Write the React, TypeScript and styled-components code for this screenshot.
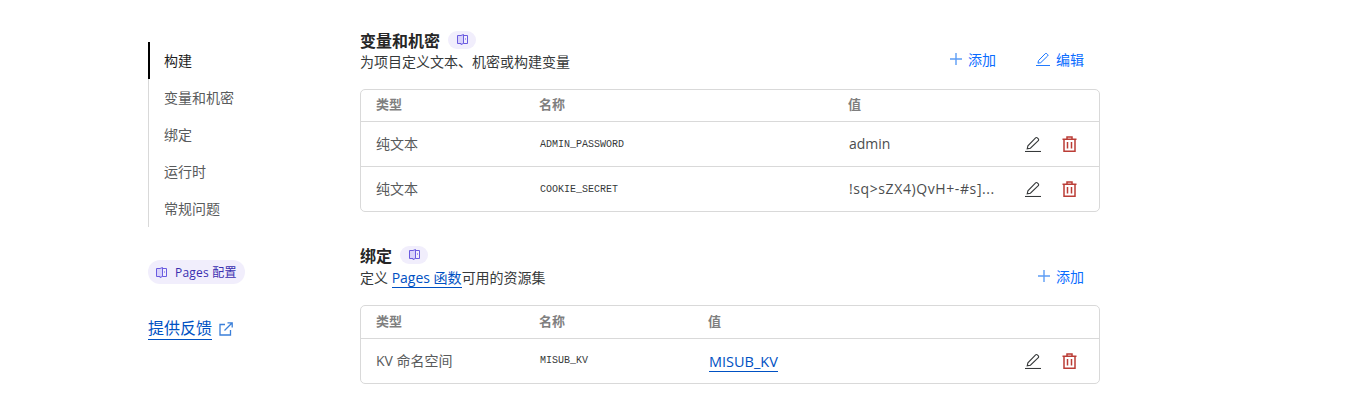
import React from "react";
import styled, { createGlobalStyle } from "styled-components";

const GlobalStyle = createGlobalStyle`
  html, body {
    margin: 0;
    padding: 0;
    background: #fff;
    overflow: hidden;
  }
  body {
    font-family: "Open Sans", "Noto Sans CJK SC", sans-serif;
    color: #36393a;
  }
  * {
    box-sizing: border-box;
  }
`;

const Page = styled.div`
  display: flex;
  width: 1366px;
  height: 410px;
  padding: 28px 0 0 148px;
`;

const Sidebar = styled.aside`
  width: 212px;
  flex-shrink: 0;
  padding-top: 14px;
`;

const Nav = styled.nav`
  display: flex;
  flex-direction: column;
  border-left: 1px solid #d9d9d9;
`;

const NavItem = styled.a<{ $active?: boolean }>`
  display: flex;
  align-items: center;
  height: 37px;
  padding: 0 0 2px 14px;
  margin-left: -1px;
  font-size: 14px;
  color: ${(props) => (props.$active ? "#1d1d1d" : "#595b5c")};
  border-left: 2px solid ${(props) => (props.$active ? "#000" : "transparent")};
`;

const DocsPill = styled.a`
  display: inline-flex;
  align-items: center;
  gap: 8px;
  height: 24px;
  margin-top: 33px;
  padding: 0 8px 0 8px;
  border-radius: 12px;
  background: #f1eefc;
  color: #3a2fb0;
  font-size: 12px;
  letter-spacing: 0.2px;
`;

const Feedback = styled.div`
  display: flex;
  align-items: center;
  gap: 7px;
  margin-top: 34px;
`;

const FeedbackLink = styled.a`
  font-size: 16px;
  line-height: 21px;
  color: #0051c3;
  border-bottom: 1px solid #0051c3;
`;

const Main = styled.main`
  width: 740px;
  display: flex;
  flex-direction: column;
  gap: 31.3px;
`;

const Section = styled.section`
  display: flex;
  flex-direction: column;
`;

const SectionHead = styled.div<{ $gap: number }>`
  display: flex;
  justify-content: space-between;
  align-items: flex-end;
  margin-bottom: ${(props) => props.$gap}px;
`;

const TitleRow = styled.div`
  display: flex;
  align-items: center;
  gap: 8px;
  height: 23px;
`;

const Title = styled.h2`
  margin: 0;
  font-size: 16px;
  font-weight: 600;
  color: #262626;
`;

const IconPill = styled.span`
  display: inline-flex;
  align-items: center;
  justify-content: center;
  width: 28px;
  height: 18px;
  border-radius: 9px;
  background: #f1eefc;
`;

const Subtitle = styled.p<{ $top?: number }>`
  margin: ${(props) => props.$top ?? 0}px 0 0;
  font-size: 14px;
  line-height: 21px;
  color: #36393a;
`;

const InlineLink = styled.a`
  color: #0051c3;
  border-bottom: 1px solid #0051c3;
`;

const Actions = styled.div<{ $lift: number }>`
  display: flex;
  align-items: center;
  gap: 40px;
  margin-right: 16px;
  margin-bottom: ${(props) => props.$lift}px;
`;

const ActionButton = styled.button`
  display: inline-flex;
  align-items: center;
  gap: 6px;
  padding: 0;
  border: 0;
  background: none;
  font: inherit;
  font-size: 14px;
  color: #0a6cff;
`;

const Table = styled.div`
  border: 1px solid #d9d9d9;
  border-radius: 5px;
`;

const Row = styled.div<{ $columns: string; $head?: boolean }>`
  display: grid;
  grid-template-columns: ${(props) => props.$columns};
  align-items: center;
  height: ${(props) => (props.$head ? 31.5 : 45)}px;
  padding-left: 15px;
  border-top: ${(props) => (props.$head ? "0" : "1px solid #d9d9d9")};
`;

const HeadCell = styled.div`
  padding-bottom: 3px;
  font-size: 13px;
  font-weight: 600;
  color: #7f7f7f;
`;

const Cell = styled.div`
  padding-bottom: 2px;
  font-size: 14px;
  color: #595b5c;
`;

const Mono = styled.div`
  font-family: "Liberation Mono", monospace;
  font-size: 10px;
  color: #36393a;
  padding-left: 1px;
`;

const Value = styled.div<{ $spread?: boolean }>`
  padding: 0 0 2px 1px;
  font-size: 14px;
  color: #4b4d4e;
  white-space: nowrap;
  letter-spacing: ${(props) => (props.$spread ? "0.6px" : "0")};
`;

const LinkCell = styled.div`
  padding-left: 1px;
`;

const ValueLink = styled.a`
  font-size: 14.5px;
  line-height: 18px;
  color: #0051c3;
  border-bottom: 1px solid #0051c3;
`;

const RowTools = styled.div`
  display: flex;
  align-items: center;
  justify-content: flex-end;
  gap: 21px;
  padding-right: 22px;
`;

const BookIcon = ({ color = "#6a5be0" }: { color?: string }) => (
  <svg width="11" height="11" viewBox="0 0 11 11" fill="none" stroke={color} strokeWidth="1">
    <path d="M.5 1.5h3.5l2.5-1v9l-2.5 1v-1H.5z" fill="#d9d3fb" />
    <path d="M6.5 1.5h4v8h-4" />
    <path d="M8 5h1" />
  </svg>
);

const PlusIcon = () => (
  <svg width="12" height="12" viewBox="0 0 12 12" stroke="#5d9df5" strokeWidth="1.4">
    <path d="M6 0v12M0 6h12" />
  </svg>
);

const EditIcon = ({ color, size }: { color: string; size: number }) => (
  <svg width={size} height={size} viewBox="0 0 16 16" fill="none" stroke={color} strokeWidth="1.1">
    <path d="M0 15.5h16" />
    <path d="M2.2 12.8l.7-3L10.6 1.9a1.2 1.2 0 0 1 1.7 0l1 1a1.2 1.2 0 0 1 0 1.7L5.4 12.2z" />
  </svg>
);

const TrashIcon = () => (
  <svg width="15" height="16" viewBox="0 0 15 16" fill="none" stroke="#bb3d36" strokeWidth="1.5">
    <path d="M.5 3.2h14M5 3V1h5v2" />
    <path d="M2 3.2v12h11v-12" />
    <path d="M5.5 6v6.5M9.5 6v6.5" />
  </svg>
);

const ExternalIcon = () => (
  <svg width="14" height="14" viewBox="0 0 14 14" fill="none" stroke="#3a7fd9" strokeWidth="1.3">
    <path d="M6 2.5H1v10.5h10.5V8" />
    <path d="M5.5 8.5L13 1M8.5 .8H13.2V5.5" />
  </svg>
);

const Tools = () => (
  <RowTools>
    <EditIcon color="#36393a" size={16} />
    <TrashIcon />
  </RowTools>
);

const varColumns = "163px 309px 1fr 90px";
const bindColumns = "163px 169px 1fr 90px";

export default function App() {
  return (
    <>
      <GlobalStyle />
      <Page>
        <Sidebar>
          <Nav>
            <NavItem $active>构建</NavItem>
            <NavItem>变量和机密</NavItem>
            <NavItem>绑定</NavItem>
            <NavItem>运行时</NavItem>
            <NavItem>常规问题</NavItem>
          </Nav>
          <DocsPill>
            <BookIcon />
            Pages 配置
          </DocsPill>
          <Feedback>
            <FeedbackLink>提供反馈</FeedbackLink>
            <ExternalIcon />
          </Feedback>
        </Sidebar>
        <Main>
          <Section>
            <SectionHead $gap={16.6}>
              <div>
                <TitleRow>
                  <Title>变量和机密</Title>
                  <IconPill>
                    <BookIcon />
                  </IconPill>
                </TitleRow>
                <Subtitle>为项目定义文本、机密或构建变量</Subtitle>
              </div>
              <Actions $lift={3}>
                <ActionButton>
                  <PlusIcon />
                  添加
                </ActionButton>
                <ActionButton>
                  <EditIcon color="#0a6cff" size={14} />
                  编辑
                </ActionButton>
              </Actions>
            </SectionHead>
            <Table>
              <Row $head $columns={varColumns}>
                <HeadCell>类型</HeadCell>
                <HeadCell>名称</HeadCell>
                <HeadCell>值</HeadCell>
              </Row>
              <Row $columns={varColumns}>
                <Cell>纯文本</Cell>
                <Mono>ADMIN_PASSWORD</Mono>
                <Value>admin</Value>
                <Tools />
              </Row>
              <Row $columns={varColumns}>
                <Cell>纯文本</Cell>
                <Mono>COOKIE_SECRET</Mono>
                <Value $spread>!sq&gt;sZX4)QvH+-#s]...</Value>
                <Tools />
              </Row>
            </Table>
          </Section>
          <Section>
            <SectionHead $gap={17}>
              <div>
                <TitleRow>
                  <Title>绑定</Title>
                  <IconPill>
                    <BookIcon />
                  </IconPill>
                </TitleRow>
                <Subtitle $top={1}>
                  定义 <InlineLink>Pages 函数</InlineLink>可用的资源集
                </Subtitle>
              </div>
              <Actions $lift={2}>
                <ActionButton>
                  <PlusIcon />
                  添加
                </ActionButton>
              </Actions>
            </SectionHead>
            <Table>
              <Row $head $columns={bindColumns}>
                <HeadCell>类型</HeadCell>
                <HeadCell>名称</HeadCell>
                <HeadCell>值</HeadCell>
              </Row>
              <Row $columns={bindColumns}>
                <Cell>KV 命名空间</Cell>
                <Mono>MISUB_KV</Mono>
                <LinkCell>
                  <ValueLink>MISUB_KV</ValueLink>
                </LinkCell>
                <Tools />
              </Row>
            </Table>
          </Section>
        </Main>
      </Page>
    </>
  );
}
